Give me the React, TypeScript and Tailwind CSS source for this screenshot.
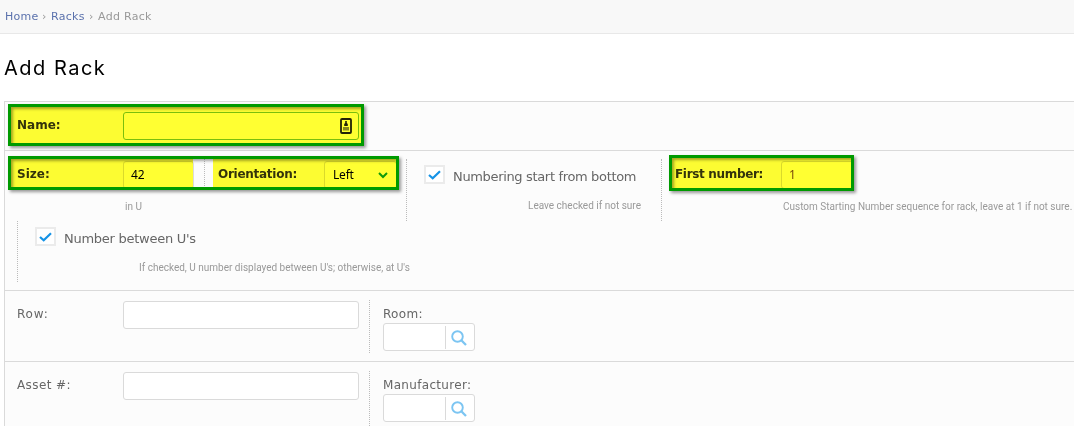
import React from 'react';

function Check() {
  return (
    <span className="flex h-[19px] w-[21px] shrink-0 items-center justify-center border-2 border-[#ebebeb] bg-white">
      <svg width="13" height="10" viewBox="0 0 13 10" fill="none" stroke="#1593e6" strokeWidth="2.2">
        <path d="M1 5 L4.7 8.3 L12 1.2" />
      </svg>
    </span>
  );
}

function Field({
  className = '',
  border = 'border-[#dadada]',
  children,
}: {
  className?: string;
  border?: string;
  children?: React.ReactNode;
}) {
  return (
    <div className={`flex h-7 shrink-0 items-center rounded-[3px] border ${border} bg-white ${className}`}>
      {children}
    </div>
  );
}

function Lookup({ label }: { label: string }) {
  return (
    <div className="ml-[13px] pt-[5px]">
      <div className="h-[18px] text-[12px] leading-[18px] tracking-[0.32px] text-[#666]">{label}</div>
      <Field className="w-[92px]">
        <div className="ml-[61px] flex h-[23px] items-center border-l border-[#dadada] pl-[5px] pt-[2px]">
          <svg width="16" height="16" viewBox="0 0 16 16" fill="none" stroke="#7cc5f2" strokeWidth="1.9">
            <circle cx="6.5" cy="6.5" r="5.3" />
            <path d="M10.3 10.3 L15 15" strokeWidth="2.3" />
          </svg>
        </div>
      </Field>
    </div>
  );
}

function Highlight({ className, fills }: { className: string; fills: string[] }) {
  return (
    <>
      {fills.map((f) => (
        <div key={f} className={`absolute bg-[#ffff32] mix-blend-multiply ${f}`} />
      ))}
      <div
        className={`absolute border-[3px] border-[#009a00] shadow-[2px_2px_3px_rgba(0,0,0,0.4),inset_3px_3px_3px_-1px_rgba(0,0,0,0.35)] ${className}`}
      />
    </>
  );
}

const hint = 'font-[Roboto,sans-serif] text-[10px] text-[#999]';
const bold = 'w-[106px] pt-[5px] text-[12px] font-bold leading-4 text-[#333]';
const value = "font-['Noto_Sans',sans-serif] text-[12px] tracking-[-0.2px]";

export default function App() {
  return (
    <div className="relative h-[426px] w-[1074px] overflow-hidden whitespace-nowrap bg-white font-['DejaVu_Sans',sans-serif]">
      <nav className="flex h-[34px] items-center border-b border-[#e8e8e8] bg-[#f8f8f8] pl-[5px] pt-px text-[11px] tracking-[0.3px] text-[#999]">
        <a className="w-[33px] text-[#5b72ad]">Home</a>
        <span className="w-[13px] pl-[4px]">›</span>
        <a className="w-[34px] text-[#5b72ad]">Racks</a>
        <span className="w-[13px] pl-[4px]">›</span>
        <span>Add Rack</span>
      </nav>
      <h1 className="h-[67px] pl-[4px] pt-[19px] font-[Inter,sans-serif] text-[20px] leading-[30px] tracking-[1.5px] text-black">
        Add Rack
      </h1>

      <main className="ml-1 h-[325px] border-l border-t border-[#dadada] bg-[#fcfcfc]">
        <section className="flex h-[49px] border-b border-[#dadada] pl-3 pt-[10px]">
          <label className={bold}>Name:</label>
          <Field className="w-[236px] justify-end pr-[6px]" border="border-[#7abf3a]">
            <svg width="12" height="16" viewBox="0 0 12 16">
              <rect x="1" y="1" width="10" height="14" rx="1" fill="none" stroke="#222" strokeWidth="1.8" />
              <path d="M5.2 3h1.6v2l1 1v2H4.2V6l1-1z" fill="#222" />
              <path d="M3 9h6v3.5H3z" fill="#888" />
            </svg>
          </Field>
        </section>

        <section className="h-[140px] border-b border-[#dadada] pl-3 pt-[8px]">
          <div className="flex h-[62px]">
            <div className="w-[187px]">
              <div className="flex pt-[2px]">
                <label className={bold}>Size:</label>
                <Field className={`w-[71px] pl-[7px] text-black ${value}`}>42</Field>
              </div>
              <div className={`${hint} pl-[108px] pt-[10px] leading-4`}>in U</div>
            </div>
            <div className="h-[29px] border-l border-dotted border-[#bbb]" />
            <div className="flex w-[201px] pl-[13px] pt-[2px]">
              <label className={`${bold} tracking-[-0.27px]`}>Orientation:</label>
              <Field className={`w-[73px] justify-between pl-[8px] pr-[8px] text-black ${value}`}>
                Left
                <svg width="10" height="7" viewBox="0 0 10 7" fill="none" stroke="#109a30" strokeWidth="2">
                  <path d="M1 1 L5 5 L9 1" />
                </svg>
              </Field>
            </div>
            <div className="w-[255px] border-l border-dotted border-[#bbb] pl-[17px]">
              <div className="flex pt-[6px]">
                <Check />
                <span className="pl-2 pt-1 text-[13px] leading-4 tracking-[-0.34px] text-[#666]">
                  Numbering start from bottom
                </span>
              </div>
              <div className={`${hint} pl-[104px] pt-[13px] leading-4`}>Leave checked if not sure</div>
            </div>
            <div className="w-[412px] border-l border-dotted border-[#bbb] pl-[13px]">
              <div className="flex pt-[2px]">
                <label className={`${bold} tracking-[-0.33px]`}>First number:</label>
                <Field className={`w-[73px] pl-[7px] text-[#7a4a2a] ${value}`}>1</Field>
              </div>
              <div className={`${hint} pl-[108px] pt-[10px] leading-4`}>
                Custom Starting Number sequence for rack, leave at 1 if not sure.
              </div>
            </div>
          </div>
          <div className="h-[61px] border-l border-dotted border-[#bbb] pl-[17px]">
            <div className="flex pt-[6px]">
              <Check />
              <span className="pl-2 pt-1 text-[13px] leading-4 tracking-[-0.26px] text-[#666]">Number between U's</span>
            </div>
            <div className={`${hint} pl-[104px] pt-[13px] leading-4`}>
              If checked, U number displayed between U's; otherwise, at U's
            </div>
          </div>
        </section>

        <section className="flex h-[71px] border-b border-[#dadada] pl-3 pt-[9px]">
          <label className="w-[106px] pt-[6px] text-[12px] leading-4 tracking-[0.8px] text-[#666]">Row:</label>
          <Field className="mt-px w-[236px]" />
          <div className="ml-[10px] h-[53px] border-l border-dotted border-[#bbb]" />
          <Lookup label="Room:" />
        </section>
        <section className="flex h-[71px] pl-3 pt-[9px]">
          <label className="w-[106px] pt-[6px] text-[12px] leading-4 tracking-[0.4px] text-[#666]">Asset #:</label>
          <Field className="mt-px w-[236px]" />
          <div className="ml-[10px] h-[55px] border-l border-dotted border-[#bbb]" />
          <Lookup label="Manufacturer:" />
        </section>
      </main>

      <Highlight className="left-[8px] top-[104px] h-[42px] w-[356px]" fills={['left-[11px] top-[107px] h-[36px] w-[350px]']} />
      <Highlight
        className="left-[8px] top-[156px] h-[34px] w-[391px]"
        fills={['left-[11px] top-[159px] h-[28px] w-[182px]', 'left-[213px] top-[159px] h-[28px] w-[183px]']}
      />
      <Highlight className="left-[669px] top-[155px] h-[36px] w-[185px]" fills={['left-[672px] top-[158px] h-[30px] w-[179px]']} />
    </div>
  );
}
